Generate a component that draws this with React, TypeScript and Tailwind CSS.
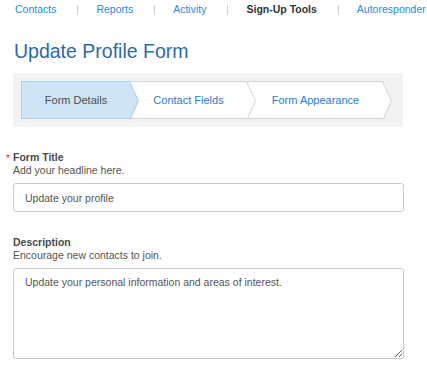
import React from "react";

const navItems = [
  { label: "Contacts", active: false },
  { label: "Reports", active: false },
  { label: "Activity", active: false },
  { label: "Sign-Up Tools", active: true },
  { label: "Autoresponder", active: false },
];

function Arrow({ fill, stroke }: { fill: string; stroke: string }) {
  return (
    <svg
      className="absolute top-0 left-full z-10"
      width="10"
      height="38"
      viewBox="0 0 10 38"
    >
      <polygon points="0,0 8.5,19 0,38" fill={fill} />
      <polyline points="0,0.5 8.5,19 0,37.5" fill="none" stroke={stroke} strokeWidth="1" />
    </svg>
  );
}

export default function App() {
  return (
    <div className="w-[427px] h-[380px] bg-white [font-family:'Liberation_Sans',Arial,sans-serif] overflow-hidden">
      {/* top nav */}
      <nav className="flex items-center h-[19px] pl-[15px] text-[10.5px] whitespace-nowrap">
        {navItems.map((item, i) => (
          <div key={item.label} className="flex items-center shrink-0">
            {i > 0 && <span className="w-px h-[10px] bg-[#d0d0d0] ml-[21px] mr-[18px]" />}
            <span
              className={
                item.active ? "font-bold text-[#2f3337]" : "text-[#2a8ad6]"
              }
            >
              {item.label}
            </span>
          </div>
        ))}
      </nav>

      <h1 className="mt-[20px] ml-[14px] text-[19.5px] leading-[24px] text-[#2c6ba3]">
        Update Profile Form
      </h1>

      {/* steps */}
      <div className="mt-[10px] mx-[13px] w-[390px] bg-[#f2f2f2] rounded-[3px] p-[8px]">
        <div className="flex h-[38px] text-[11px]">
          <div className="relative w-[109px] h-full flex items-center justify-center bg-[#cfe4f5] border border-r-0 border-[#a9cfe9] text-[#4d4d4d]">
            Form Details
            <Arrow fill="#cfe4f5" stroke="#a9cfe9" />
          </div>
          <div className="relative w-[118px] h-full flex items-center justify-center bg-white border-y border-r border-[#d2d2d2] text-[#1f80cc]">
            Contact Fields
            <Arrow fill="#ffffff" stroke="#d2d2d2" />
          </div>
          <div className="relative w-[136px] h-full flex items-center justify-center bg-white border-y border-r border-[#d2d2d2] text-[#1f80cc]">
            Form Appearance
            <Arrow fill="#ffffff" stroke="#d2d2d2" />
          </div>
        </div>
      </div>

      {/* form */}
      <div className="mx-[13px] w-[391px] text-[10.5px] leading-[13px]">
        <div className="mt-[24px] relative">
          <span className="absolute left-[-7px] top-[1px] text-[#e0392c]">*</span>
          <div className="font-bold text-[#4a4a4a]">Form Title</div>
          <div className="text-[#555]">Add your headline here.</div>
        </div>
        <input
          className="mt-[6px] block w-full h-[29px] px-[11px] border border-[#c9c9c9] rounded-[3px] text-[10.5px] text-[#555] outline-none"
          defaultValue="Update your profile"
        />

        <div className="mt-[24px]">
          <div className="font-bold text-[#4a4a4a]">Description</div>
          <div className="text-[#555]">Encourage new contacts to join.</div>
        </div>
        <textarea
          className="mt-[6px] block w-full h-[91px] px-[11px] pt-[6px] border border-[#c9c9c9] rounded-[3px] text-[10.5px] leading-[14px] text-[#555] outline-none"
          defaultValue="Update your personal information and areas of interest."
        />
      </div>
    </div>
  );
}
